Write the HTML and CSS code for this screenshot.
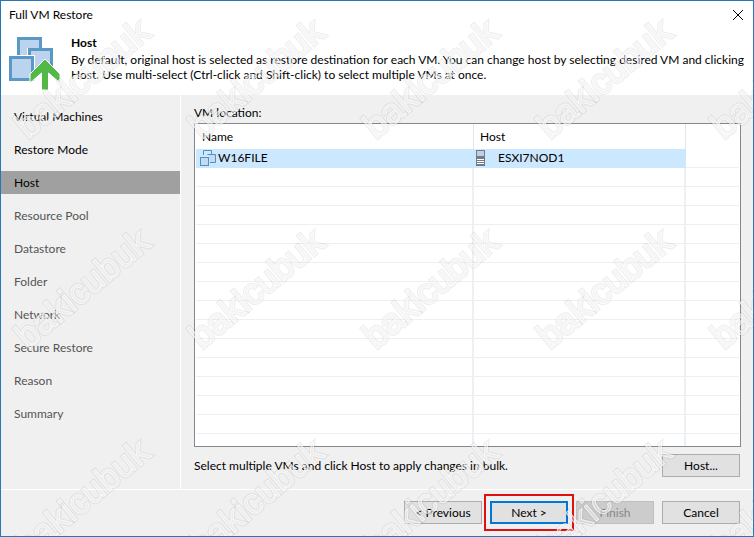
FILE: index.html
```html
<!DOCTYPE html>
<html lang="en">
<head>
  <meta charset="UTF-8" />
  <title>Full VM Restore</title>
  <link rel="stylesheet" href="styles.css">
</head>
<body>
  <div class="window">
    <header class="top">
      <div class="titlebar">
        <span>Full VM Restore</span>
        <button class="close" aria-label="Close">
          <svg width="10" height="10" viewBox="0 0 10 10"><path d="M0 0L10 10M10 0L0 10" stroke="#000" fill="none"/></svg>
        </button>
      </div>
      <div class="intro">
        <svg class="intro-icon" width="51" height="54" viewBox="0 0 51 54">
          <g fill="#bcd3ef" stroke="#5a99c3" stroke-width="3">
            <rect x="9.500" y="1.500" width="22" height="22"/>
            <path d="M18 11H46V39H18Z" fill="#fff" stroke="none"/>
            <rect x="20.500" y="12.500" width="22" height="22"/>
            <path d="M0 18H26V46H0Z" fill="#fff" stroke="none"/>
            <rect x="1.500" y="20.500" width="22" height="22"/>
          </g>
          <path d="M36 22L51 37V46L39.500 36V53H32.500V36L21 46V37Z" fill="#52b848" stroke="#fff"/>
        </svg>
        <div>
          <h1>Host</h1>
          <p>By default, original host is selected as restore destination for each VM. You can change host by selecting desired VM and clicking Host. Use multi-select (Ctrl-click and Shift-click) to select multiple VMs at once.</p>
        </div>
      </div>
    </header>

    <div class="content">
      <nav class="steps">
        <a href="#" class="done">Virtual Machines</a>
        <a href="#" class="done">Restore Mode</a>
        <a href="#" class="current" aria-current="step">Host</a>
        <a href="#">Resource Pool</a>
        <a href="#">Datastore</a>
        <a href="#">Folder</a>
        <a href="#">Network</a>
        <a href="#">Secure Restore</a>
        <a href="#">Reason</a>
        <a href="#">Summary</a>
      </nav>

      <main>
        <div class="label" id="vmLabel">VM location:</div>
        <div class="list">
          <table aria-labelledby="vmLabel">
            <colgroup><col class="col-name"><col class="col-host"><col></colgroup>
            <thead>
              <tr><th>Name</th><th>Host</th><th></th></tr>
            </thead>
            <tbody>
              <tr class="selected">
                <td>
                  <span class="cell vm">
                    <svg width="16" height="16" viewBox="0 0 16 16" fill="#c3daf2" stroke="#5291bd">
                      <path d="M3.500 5V.5H11.500V4" fill="none"/>
                      <path d="M9 4.500H15.500V12.500H10"/>
                      <path d="M7.500 4.500H9" fill="none"/>
                      <rect x=".5" y="7.500" width="8" height="8"/>
                    </svg>
                    W16FILE
                  </span>
                </td>
                <td>
                  <span class="cell host">
                    <svg width="9" height="16" viewBox="0 0 9 16">
                      <rect width="9" height="16" fill="#737b84"/>
                      <rect x="1" y="1" width="7" height="5" fill="#bdd0e8"/>
                      <path d="M1 9.500H8M1 11.500H8M1 13.500H8" stroke="#fff"/>
                    </svg>
                    ESXI7NOD1
                  </span>
                </td>
                <td></td>
              </tr>
              <tr><td></td><td></td><td></td></tr>
              <tr><td></td><td></td><td></td></tr>
              <tr><td></td><td></td><td></td></tr>
              <tr><td></td><td></td><td></td></tr>
              <tr><td></td><td></td><td></td></tr>
              <tr><td></td><td></td><td></td></tr>
              <tr><td></td><td></td><td></td></tr>
              <tr><td></td><td></td><td></td></tr>
              <tr><td></td><td></td><td></td></tr>
              <tr><td></td><td></td><td></td></tr>
              <tr><td></td><td></td><td></td></tr>
              <tr><td></td><td></td><td></td></tr>
              <tr><td></td><td></td><td></td></tr>
              <tr><td></td><td></td><td></td></tr>
              <tr class="rest"><td></td><td></td><td></td></tr>
            </tbody>
          </table>
        </div>
        <div class="bulk">
          <span>Select multiple VMs and click Host to apply changes in bulk.</span>
          <button class="btn">Host...</button>
        </div>
      </main>
    </div>

    <footer>
      <button class="btn">&lt; Previous</button>
      <div class="marked"><button class="btn primary">Next &gt;</button></div>
      <button class="btn" disabled>Finish</button>
      <button class="btn">Cancel</button>
    </footer>

    <!-- Watermark repeated over the whole window -->
    <svg class="watermark" aria-hidden="true">
      <defs>
        <pattern id="mark" x="6" y="158" width="174" height="210" patternUnits="userSpaceOnUse">
          <g transform="translate(21 191) rotate(-40)">
            <text class="mark-edge">bakicubuk</text>
            <text class="mark-face">bakicubuk</text>
          </g>
        </pattern>
      </defs>
      <rect width="100%" height="100%" fill="url(#mark)"/>
    </svg>
  </div>
</body>
</html>
```

FILE: styles.css
```css
* {
  margin: 0;
  padding: 0;
  box-sizing: border-box;
}

body {
  font-family: Lato, "Open Sans", sans-serif;
  font-size: 12px;
  line-height: 16px;
  color: #000;
}

.window {
  position: relative;
  display: flex;
  flex-direction: column;
  min-height: 100vh;
  border: 1px solid #2878b8;
  background: #f0f0f0;
}

/* Title and page description */
.top {
  background: #fff;
  padding-bottom: 4px;
}

.titlebar {
  display: flex;
  justify-content: space-between;
  align-items: center;
  height: 28px;
  padding: 0 10px 0 8px;
}

.close {
  display: flex;
  border: none;
  background: none;
}

.intro {
  display: flex;
  gap: 11px;
  padding: 5px 4px 0 8px;
}

.intro-icon {
  flex: none;
  margin-top: 3px;
}

h1 {
  font-size: 12px;
  line-height: 18px;
}

.intro p {
  line-height: 15px;
}

/* Steps on the left, page on the right */
.content {
  flex: 1;
  display: flex;
  border-bottom: 1px solid #fff;
}

.steps {
  flex: none;
  display: flex;
  flex-direction: column;
  gap: 10px;
  width: 180px;
  padding-top: 10px;
  border-right: 1px solid #fff;
}

.steps a {
  padding-left: 13px;
  line-height: 23px;
  color: #555;
  text-decoration: none;
}

.steps .done {
  color: #000;
}

.steps .current {
  color: #000;
  background: #a0a0a0;
}

main {
  flex: 1;
  display: flex;
  flex-direction: column;
  padding: 10px 12px 12px 13px;
}

.label {
  height: 18px;
}

.list {
  flex: 1;
  padding: 0 1px;
  border: 1px solid #828790;
  background: #fff;
}

table {
  width: 100%;
  table-layout: fixed;
  border-collapse: separate;
  border-spacing: 0;
}

.col-name {
  width: 278px;
}

.col-host {
  width: 212px;
}

th {
  height: 25px;
  padding-left: 6px;
  border-right: 1px solid #e5e5e5;
  font-weight: normal;
  text-align: left;
}

td {
  height: 19px;
  border-right: 2px solid #edf0f2;
  border-bottom: 1px solid #edf0f2;
}

th:last-child,
td:last-child {
  border-right: none;
}

.selected td:not(:last-child) {
  border-color: #cce8ff;
  background: #cce8ff;
}

.rest td {
  height: 12px;
  border-bottom: none;
}

.cell {
  display: flex;
  align-items: center;
}

.vm {
  gap: 2px;
  padding-left: 4px;
}

.host {
  gap: 13px;
  padding-left: 2px;
}

.bulk {
  display: flex;
  justify-content: space-between;
  align-items: center;
  margin-top: 7px;
  padding-right: 1px;
}

/* Buttons */
.btn {
  width: 78px;
  height: 23px;
  border: 1px solid #adadad;
  background: #e1e1e1;
  font-family: inherit;
  font-size: 12px;
  line-height: 16px;
  color: #000;
}

.btn:disabled {
  border-color: #bfbfbf;
  background: #ccc;
  color: #888;
}

.primary {
  display: block;
  border: 2px solid #0078d7;
}

footer {
  display: flex;
  justify-content: flex-end;
  gap: 8px;
  padding: 11px 13px 12px;
}

/* Red frame round the button to press */
.marked {
  position: relative;
}

.marked::after {
  content: "";
  position: absolute;
  inset: -7px -6px;
  border: 2px solid #e01010;
  pointer-events: none;
}

.watermark {
  position: absolute;
  inset: 0;
  width: 100%;
  height: 100%;
  pointer-events: none;
}

.mark-edge,
.mark-face {
  font-family: "Liberation Sans", Arial, sans-serif;
  font-size: 36px;
}

.mark-edge {
  fill: none;
  stroke: #000;
  stroke-width: 3px;
  stroke-opacity: 0.07;
}

.mark-face {
  fill: #fff;
  fill-opacity: 0.4;
  stroke: #fff;
  stroke-width: 1px;
  stroke-opacity: 0.7;
}
```
